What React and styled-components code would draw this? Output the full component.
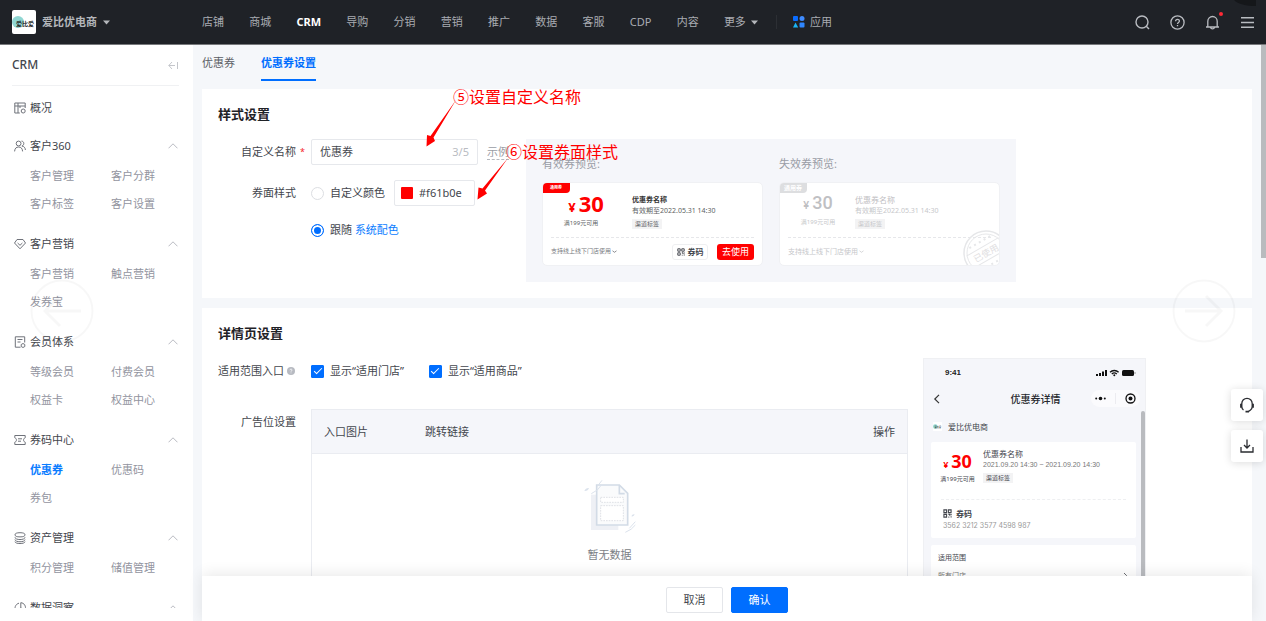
import React from "react";
import styled, { createGlobalStyle, css } from "styled-components";

const GlobalStyle = createGlobalStyle`
  *, *::before, *::after { box-sizing: border-box; }
  body { margin: 0; background: #f5f7fa; }
  body, button, input, table {
    font-family: "Noto Sans", "Noto Sans CJK SC", sans-serif;
    font-size: 11px;
    line-height: 18px;
    color: #43464d;
  }
  button { margin: 0; padding: 0; border: 0; background: none; cursor: pointer; }
  a { color: inherit; text-decoration: none; }
  h1, h2, p, ul { margin: 0; padding: 0; }
  ul { list-style: none; }
  svg { display: block; flex: none; }
`;

const Shell = styled.div`
  display: flex;
  flex-direction: column;
  height: 100vh;
  overflow: hidden;
`;

/* ---------- top bar ---------- */

const TopBar = styled.header`
  flex: none;
  display: flex;
  align-items: center;
  height: 45px;
  padding: 0 11px 0 12px;
  background: #1f2227;
  border-bottom: 1px solid #77797c;
  color: #a9acb2;
  position: relative;
`;

const Corner = styled.svg`
  position: absolute;
  top: 0;
  right: 8px;
`;

const Shop = styled.button`
  display: flex;
  align-items: center;
  gap: 6px;
  width: 190px;
  color: #b4b7bb;
  font-weight: 700;
`;

const TopNav = styled.nav`
  display: flex;
  justify-content: space-between;
  width: 556px;
`;

const TopLink = styled.a`
  display: flex;
  align-items: center;
  gap: 5px;
  color: ${(p) => (p.$active ? "#fff" : "#a9acb2")};
  font-weight: ${(p) => (p.$active ? 700 : 400)};
`;

const Separator = styled.span`
  width: 1px;
  height: 14px;
  margin: 0 16px 0 18px;
  background: #2c2f34;
`;

const Tools = styled.div`
  display: flex;
  gap: 20px;
  margin-left: auto;
`;

const ToolButton = styled.button`
  position: relative;
  width: 15px;
  height: 15px;
  color: #b9bcc1;
`;

const Dot = styled.span`
  position: absolute;
  top: -3px;
  right: -3px;
  width: 4px;
  height: 4px;
  border-radius: 50%;
  background: #ff2a36;
`;

const Caret = () => (
  <svg width="7" height="5" viewBox="0 0 7 5">
    <path d="M0 0.5h7L3.5 4.5z" fill="#b4b7bb" />
  </svg>
);

/* ---------- side menu ---------- */

const Body = styled.div`
  flex: 1;
  min-height: 0;
  display: flex;
  position: relative;
`;

const Side = styled.aside`
  flex: none;
  display: flex;
  flex-direction: column;
  width: 193px;
  padding-bottom: 13px;
  background: #fff;
`;

const SideHead = styled.div`
  flex: none;
  display: flex;
  justify-content: space-between;
  align-items: center;
  height: 41px;
  margin: 0 14px 0 12px;
  border-bottom: 1px solid #f0f1f3;
  font-size: 12px;
  font-weight: 500;
`;

const SideList = styled.nav`
  flex: 1;
  min-height: 0;
  padding-top: 8px;
  overflow: auto;
  scrollbar-width: none;
`;

const Group = styled.section`
  margin-bottom: ${(p) => (p.$single ? 8 : 10)}px;
`;

const groupHead = css`
  display: flex;
  align-items: center;
  gap: 4px;
  width: 100%;
  padding: 0 15px 0 14px;
  color: #43464d;
  text-align: left;
  span { flex: 1; }
  svg { color: #6f727a; }
`;

const GroupLink = styled.a`
  ${groupHead}
  height: 28px;
`;

const GroupButton = styled.button`
  ${groupHead}
  height: 32px;
`;

const SubList = styled.ul`
  display: grid;
  grid-template-columns: 81px 1fr;
  padding-left: 30px;
`;

const SubLink = styled.a`
  display: block;
  line-height: 28px;
  color: ${(p) => (p.$active ? "#0a7cff" : "#9294a0")};
  font-weight: ${(p) => (p.$active ? 700 : 400)};
`;

/* ---------- main area ---------- */

const Main = styled.main`
  flex: 1;
  min-width: 0;
  display: flex;
  flex-direction: column;
  padding: 0 14px 0 9px;
`;

const Scroller = styled.div`
  flex: 1;
  min-height: 0;
  overflow: auto;
  scrollbar-width: none;
`;

const ScrollThumb = styled.span`
  position: absolute;
  top: 0;
  right: 0;
  width: 5px;
  height: 213px;
  background: #b9bbbe;
`;

const Tabs = styled.nav`
  display: flex;
  gap: 26px;
  margin-bottom: 8px;
`;

const Tab = styled.a`
  height: 36px;
  line-height: 36px;
  color: ${(p) => (p.$active ? "#006eff" : "#5a5d64")};
  font-weight: ${(p) => (p.$active ? 700 : 400)};
  box-shadow: ${(p) => (p.$active ? "inset 0 -2px #006eff" : "none")};
`;

const Panel = styled.section`
  margin-bottom: 10px;
  padding: 0 16px 16px;
  background: #fff;
`;

const PanelTitle = styled.h2`
  height: 50px;
  line-height: 50px;
  font-size: 13px;
  font-weight: 700;
  color: #1f2227;
`;

const Columns = styled.div`
  display: flex;
  align-items: flex-start;
  gap: ${(p) => p.$gap || 0}px;
  padding-right: ${(p) => p.$right || 0}px;
`;

const Form = styled.div`
  display: flex;
  flex-direction: column;
  gap: ${(p) => p.$gap}px;
  min-width: 0;
  flex: ${(p) => (p.$width ? "none" : 1)};
  width: ${(p) => (p.$width ? p.$width + "px" : "auto")};
`;

const Field = styled.div`
  display: grid;
  grid-template-columns: 78px minmax(0, 1fr);
  column-gap: 15px;
  align-items: start;
`;

const FieldLabel = styled.label`
  position: relative;
  display: flex;
  align-items: center;
  justify-content: ${(p) => (p.$start ? "flex-start" : "flex-end")};
  gap: 3px;
  height: 26px;
  white-space: nowrap;
`;

const Required = styled.span`
  position: absolute;
  left: 100%;
  margin-left: 4px;
  color: #f5222d;
  font-size: 9px;
`;

const Line = styled.div`
  display: flex;
  align-items: center;
  gap: ${(p) => p.$gap || 9}px;
  height: 26px;
`;

const Stack = styled.div`
  display: flex;
  flex-direction: column;
  gap: 11px;
`;

const TextBox = styled.div`
  display: flex;
  align-items: center;
  width: 167px;
  height: 26px;
  padding: 0 8px;
  gap: 6px;
  border: 1px solid #e6e8ec;
  border-radius: 2px;
  color: #b9bcc2;
  input {
    flex: 1;
    min-width: 0;
    padding: 0;
    border: 0;
    outline: 0;
    background: none;
  }
`;

const ColorBox = styled(TextBox)`
  width: 81px;
  padding: 0 6px;
`;

const Swatch = styled.span`
  flex: none;
  width: 12px;
  height: 12px;
  border-radius: 1px;
  background: #f00;
`;

const Hint = styled.a`
  line-height: 15px;
  color: #9a9da5;
  border-bottom: 1px dashed #b5b8be;
`;

const Choice = styled.label`
  display: flex;
  align-items: center;
  gap: 6px;
  white-space: nowrap;
`;

const Radio = styled.input`
  appearance: none;
  width: 13px;
  height: 13px;
  margin: 0;
  border: 1px solid #dcdee2;
  border-radius: 50%;
  background: #fff;
  &:checked {
    border-color: #006eff;
    background: #006eff;
    box-shadow: inset 0 0 0 2px #fff;
  }
`;

const Tick = styled.input`
  appearance: none;
  display: grid;
  place-items: center;
  width: 13px;
  height: 13px;
  margin: 0;
  border: 1px solid #dcdee2;
  border-radius: 1px;
  &:checked {
    border-color: #006eff;
    background: #006eff;
  }
  &:checked::after {
    content: "";
    width: 8px;
    height: 4px;
    margin-bottom: 2px;
    border: solid #fff;
    border-width: 0 0 1px 1px;
    transform: rotate(-45deg);
  }
`;

const BlueLink = styled.a`
  color: #0a7cff;
`;

/* ---------- coupon previews ---------- */

const Preview = styled.div`
  display: flex;
  gap: 16px;
  padding: 16px;
  background: #f5f6fa;
`;

const PreviewItem = styled.figure`
  margin: 0;
  width: 221px;
`;

const PreviewCaption = styled.figcaption`
  margin-bottom: 9px;
  color: #999ca5;
`;

const Coupon = styled.article`
  position: relative;
  display: flex;
  flex-direction: column;
  height: 84px;
  padding: 0 8px;
  background: #fff;
  border: 1px solid #f0f1f4;
  border-radius: 5px;
  overflow: hidden;
  color: ${(p) => (p.$used ? "#c6c7ca" : "#5d5f64")};
`;

const CouponTag = styled.span`
  position: absolute;
  top: -1px;
  left: -1px;
  width: 28px;
  height: 11px;
  line-height: 12px;
  border-radius: 4px 0 4px 0;
  background: ${(p) => (p.$used ? "#dddee0" : "#f00")};
  color: #fff;
  font-size: ${(p) => (p.$used ? 6 : 4)}px;
  font-weight: 700;
  text-align: center;
`;

const CouponTop = styled.div`
  display: grid;
  grid-template-columns: 60px 1fr;
  column-gap: ${(p) => (p.$used ? 7 : 21)}px;
  height: 55px;
  border-bottom: 1px dashed #e6e7ea;
`;

const Price = styled.div`
  display: flex;
  flex-direction: column;
  align-items: center;
  padding-top: ${(p) => p.$top}px;
  white-space: nowrap;
`;

const Amount = styled.div`
  display: flex;
  align-items: baseline;
  gap: 3px;
  padding-left: ${(p) => p.$indent || 0}px;
  line-height: ${(p) => p.$line}px;
  font-size: ${(p) => p.$size}px;
  font-weight: ${(p) => (p.$used ? 500 : 700)};
  font-family: ${(p) => (p.$used ? "Roboto, sans-serif" : "inherit")};
  color: ${(p) => (p.$used ? "#bfc0c3" : "#f00")};
  small { font-size: ${(p) => p.$small}px; }
`;

const Fine = styled.span`
  font-size: ${(p) => p.$size}px;
  line-height: 11px;
  color: ${(p) => p.$color || "inherit"};
  font-weight: ${(p) => (p.$bold ? 700 : 400)};
  font-family: ${(p) => p.$font || "inherit"};
  white-space: nowrap;
`;

const Info = styled.div`
  display: flex;
  flex-direction: column;
  align-items: flex-start;
  padding-top: ${(p) => p.$top}px;
`;

const Chip = styled.span`
  margin-top: 3px;
  padding: 0 3px;
  background: #f3f3f4;
  font-size: 6px;
  line-height: 10px;
`;

const CouponFoot = styled.div`
  flex: 1;
  display: flex;
  align-items: center;
  gap: 9px;
`;

const MiniText = styled.div`
  flex: 1;
  display: flex;
  align-items: center;
  gap: 1px;
`;

const CodeButton = styled.button`
  display: flex;
  align-items: center;
  justify-content: center;
  gap: 3px;
  width: 36px;
  height: 16px;
  border: 1px solid #eeeff1;
  border-radius: 3px;
  font-size: 8px;
  font-weight: 700;
`;

const UseButton = styled.button`
  width: 37px;
  height: 16px;
  line-height: 16px;
  border-radius: 3px;
  background: #f00;
  color: #fff;
  font-size: 9px;
`;

const Stamp = styled.svg`
  position: absolute;
  right: -10px;
  bottom: -11px;
`;

/* ---------- table ---------- */

const Table = styled.table`
  width: 100%;
  border: 1px solid #eaecf1;
  border-spacing: 0;
  th {
    height: 44px;
    padding: 0 12px;
    background: #f5f6fa;
    border-bottom: 1px solid #eaecf1;
    font-weight: 400;
    text-align: left;
  }
  th:first-child { width: 101px; }
  th:last-child { text-align: right; }
  td { padding: 25px 0 60px; }
`;

const Empty = styled.div`
  display: flex;
  flex-direction: column;
  align-items: center;
  gap: 12px;
  color: #7b7e85;
`;

/* ---------- phone preview ---------- */

const Phone = styled.div`
  flex: none;
  position: relative;
  width: 223px;
  height: 360px;
  padding: 0 9px 0 7px;
  background: #f5f6fa;
  border: 1px solid #eff0f3;
`;

const PhoneStatus = styled.div`
  display: flex;
  align-items: center;
  justify-content: space-between;
  height: 27px;
  padding-left: 14px;
  font: 700 8px/10px "Liberation Sans", sans-serif;
  color: #222;
`;

const PhoneBar = styled.div`
  display: grid;
  grid-template-columns: 49px 1fr 49px;
  align-items: center;
  height: 25px;
  margin-right: -4px;
  font-size: 10px;
  font-weight: 500;
  color: #26282c;
  text-align: center;
`;

const Capsule = styled.span`
  display: flex;
  align-items: center;
  justify-content: space-around;
  height: 17px;
  border-radius: 9px;
  background: #fbfbfd;
`;

const CapsuleRule = styled.span`
  width: 1px;
  height: 11px;
  background: #ececf0;
`;

const PhoneShop = styled.div`
  display: flex;
  align-items: center;
  gap: 6px;
  height: 31px;
  padding-left: 2px;
  font-size: 8px;
`;

const PhoneCard = styled.div`
  margin-bottom: 7px;
  padding: ${(p) => p.$pad};
  background: #fff;
  border-radius: 2px;
`;

const PhoneTop = styled.div`
  display: grid;
  grid-template-columns: 33px 1fr;
  column-gap: 9px;
  height: 58px;
  border-bottom: 1px dashed #eeeff1;
`;

const PhoneCode = styled.div`
  display: flex;
  flex-direction: column;
  gap: 1px;
  padding: 8px 2px 7px;
`;

const CodeTitle = styled.div`
  display: flex;
  align-items: center;
  gap: 4px;
`;

const PhoneRow = styled.div`
  display: flex;
  align-items: center;
  justify-content: space-between;
  height: 18px;
`;

const PhoneThumb = styled.span`
  position: absolute;
  top: 52px;
  right: 0;
  width: 4px;
  height: 300px;
  border-radius: 2px;
  background: #b9bbbf;
`;

/* ---------- footer and floating parts ---------- */

const Footer = styled.footer`
  flex: none;
  position: relative;
  display: flex;
  justify-content: center;
  align-items: center;
  gap: 8px;
  height: 45px;
  padding-top: 2px;
  background: #fff;
  box-shadow: 0 -2px 14px rgba(0, 0, 0, 0.09);
`;

const FootButton = styled.button`
  width: 57px;
  height: 26px;
  border: 1px solid ${(p) => (p.$primary ? "#006eff" : "#e4e6ea")};
  border-radius: 2px;
  background: ${(p) => (p.$primary ? "#006eff" : "#fff")};
  color: ${(p) => (p.$primary ? "#fff" : "#43464d")};
`;

const PageArrow = styled.button`
  position: fixed;
  top: 50%;
  ${(p) => p.$side}: 30px;
  width: 64px;
  height: 64px;
  margin-top: -32px;
`;

const Floaters = styled.div`
  position: fixed;
  right: 3px;
  top: 389px;
  display: flex;
  flex-direction: column;
  gap: 9px;
`;

const FloatButton = styled.button`
  display: grid;
  place-items: center;
  width: 32px;
  height: 32px;
  border-radius: 3px;
  background: #fff;
  color: #2a2c31;
  box-shadow: 0 1px 8px rgba(0, 0, 0, 0.14);
`;

const Note = styled.p`
  position: absolute;
  left: ${(p) => p.$x}px;
  top: ${(p) => p.$y}px;
  font-size: 16px;
  line-height: 24px;
  color: #f00;
  white-space: nowrap;
`;

const NoteArrows = styled.svg`
  position: absolute;
  left: 420px;
  top: 90px;
  pointer-events: none;
`;

/* ---------- icons ---------- */

const Stroke = ({ size = 12, box = 12, w = 1, children }) => (
  <svg width={size} height={size} viewBox={`0 0 ${box} ${box}`} fill="none" stroke="currentColor" strokeWidth={w}>
    {children}
  </svg>
);

const menuIcons = {
  overview: <path d="M.8 1h10.4v3H.8zM.8 4v7h5M4 1v10M6 4v2M11.2 4v2M7.2 9a2 2 0 1 0 4 0 2 2 0 1 0-4 0" />,
  people: <path d="M2.2 3.5a2.4 2.4 0 1 0 4.8 0 2.4 2.4 0 1 0-4.8 0M.6 11.4C.8 8.4 2.2 7 4.6 7s3.8 1.400 4 4.400M7.500 1.100c3 .2 3 4.200.4 4.900 2.200.4 3.300 1.600 3.500 4" />,
  gem: <path d="M3 1.500h6L11.500 5 6 10.800.5 5zM3.600 5 6 7.300 8.400 5" />,
  member: <path d="M6.500 11.200H1.300V.8h9.400v5.700M3.500 3.500h5M3.500 6h3M9 7.500l1.800 1v2L9 11.500l-1.800-1v-2z" />,
  ticket: <path d="M.8 1.500h10.400v2.300c-2.200.9-2.200 3.500 0 4.400v2.300H.8V8.200c2.200-.9 2.200-3.500 0-4.400zM4 4.800h4M4 7.200h3" />,
  stack: <path d="M1 2.800a5 2.100 0 1 0 10 0 5 2.100 0 1 0-10 0M1 5.300c0 3 10 3 10 0M1 7.500c0 3 10 3 10 0M1 9.600c0 2.600 10 2.600 10 0" />,
  pie: <path d="M5 1.200A5 5 0 1 0 10.600 8.200M6.800.7V6l4.200 2C12.500 4.500 10.300.9 6.800.7z" />,
};

const ChevronUp = () => (
  <svg width="10" height="6" viewBox="0 0 10 6" fill="none" stroke="#b9bbc2">
    <path d="M.5 5.300 5 .8l4.500 4.500" />
  </svg>
);

const ShopLogo = ({ size }) => (
  <svg width={size} height={size} viewBox="0 0 24 24">
    <rect width="24" height="24" rx="2" fill="#fff" />
    <circle cx="6" cy="12" r="6" fill="#8fd6d2" />
    <text x="4" y="16" fontSize="6" fontWeight="700" fill="#222">爱比爱</text>
  </svg>
);

const QrIcon = ({ size = 8 }) => (
  <Stroke size={size} box={10} w={1.2}>
    <path d="M1 1h3v3H1zM6 1h3v3H6zM1 6h3v3H1zM6 6h1.500v1.500M9 5.500V7M6 9h1M9 8v1.500" />
  </Stroke>
);

const EmptyArt = () => (
  <svg width="52" height="55" viewBox="0 0 156 165" fill="none">
    <rect x="21" y="47" width="82" height="106" fill="#eef0f5" />
    <path d="M38 18h68l25 25v95H38z" fill="#fafbfc" stroke="#d2dbe6" strokeWidth="5" />
    <path d="M106 18v26h16" stroke="#d2dbe6" strokeWidth="5" />
    <path d="M50 55h68v15H50zM50 80h68v45H50z" stroke="#dfe1e6" strokeWidth="3" strokeDasharray="5 3" fill="#fff" />
    <path d="M22 44Q44 34 52 18M40 22 54 4M124 160Q144 152 154 138M136 148 154 128" stroke="#dbe2ec" strokeWidth="3" />
    <path d="M1 36q4-10 14-9-3 10-14 9zM142 112q3-8 10-6-2 8-10 6z" fill="#dbe2ec" />
  </svg>
);

/* ---------- data ---------- */

const topLinks = ["店铺", "商城", "CRM", "导购", "分销", "营销", "推广", "数据", "客服", "CDP", "内容"];

const groups = [
  { icon: "people", title: "客户360", items: ["客户管理", "客户分群", "客户标签", "客户设置"] },
  { icon: "gem", title: "客户营销", items: ["客户营销", "触点营销", "发券宝"] },
  { icon: "member", title: "会员体系", items: ["等级会员", "付费会员", "权益卡", "权益中心"] },
  { icon: "ticket", title: "券码中心", items: ["优惠券", "优惠码", "券包"] },
  { icon: "stack", title: "资产管理", items: ["积分管理", "储值管理"] },
  { icon: "pie", title: "数据洞察", items: [] },
];

/* ---------- sections ---------- */

const Header = () => (
  <TopBar>
    <Corner width="26" height="7" viewBox="0 0 26 7">
      <path d="M2 0h22v6C14 6 6 4 2 0z" fill="#15171a" />
    </Corner>
    <Shop>
      <ShopLogo size={24} />
      爱比优电商
      <Caret />
    </Shop>
    <TopNav>
      {topLinks.map((t) => (
        <TopLink key={t} href="#" $active={t === "CRM"}>{t}</TopLink>
      ))}
      <TopLink href="#">更多 <Caret /></TopLink>
    </TopNav>
    <Separator />
    <TopLink href="#">
      <svg width="12" height="12" viewBox="0 0 12 12">
        <rect x="0" y="0" width="5" height="5" rx="1" fill="#0a6cff" />
        <circle cx="9" cy="2.500" r="2.500" fill="#3f8cff" />
        <path d="M2.500 6.500 5.200 11.500H0z" fill="#19b5f5" />
        <rect x="6.500" y="6.500" width="5" height="5" rx="1" fill="#2f86ff" />
      </svg>
      应用
    </TopLink>
    <Tools>
      <ToolButton aria-label="搜索">
        <Stroke size={15} box={15} w={1.4}><circle cx="7" cy="7" r="6" /><path d="m11.300 11.300 2.700 2.700" /></Stroke>
      </ToolButton>
      <ToolButton aria-label="帮助">
        <Stroke size={15} box={15} w={1.3}>
          <circle cx="7.500" cy="7.500" r="6.600" />
          <path d="M5.600 6.200c0-2.500 3.800-2.400 3.800-.2 0 1.400-1.900 1.400-1.900 2.900M7.500 10v1.300" />
        </Stroke>
      </ToolButton>
      <ToolButton aria-label="通知">
        <Stroke size={15} box={15} w={1.3}>
          <path d="M1 12h13M2.800 12V6.200a4.700 4.700 0 0 1 9.400 0V12M5.500 12.500c.6 1.800 3.400 1.800 4 0" />
        </Stroke>
        <Dot />
      </ToolButton>
      <ToolButton aria-label="菜单">
        <Stroke size={15} box={15} w={1.4}><path d="M1 2.700h13M1 7.500h13M1 12.300h13" /></Stroke>
      </ToolButton>
    </Tools>
  </TopBar>
);

const SideMenu = () => (
  <Side>
    <SideHead>
      CRM
      <svg width="11" height="9" viewBox="0 0 11 9" fill="none" stroke="#c4c6cb">
        <path d="M4 1 .8 4.500 4 8M.8 4.500H7M9.500 1v7" />
      </svg>
    </SideHead>
    <SideList>
      <Group $single>
        <GroupLink href="#"><Stroke>{menuIcons.overview}</Stroke><span>概况</span></GroupLink>
      </Group>
      {groups.map((g) => (
        <Group key={g.title}>
          <GroupButton><Stroke>{menuIcons[g.icon]}</Stroke><span>{g.title}</span><ChevronUp /></GroupButton>
          <SubList>
            {g.items.map((t) => (
              <li key={t}><SubLink href="#" $active={t === "优惠券"}>{t}</SubLink></li>
            ))}
          </SubList>
        </Group>
      ))}
    </SideList>
  </Side>
);

const CouponPreview = ({ used }) => (
  <PreviewItem>
    <PreviewCaption>{used ? "失效券预览:" : "有效券预览:"}</PreviewCaption>
    <Coupon $used={used}>
      <CouponTag $used={used}>通用券</CouponTag>
      <CouponTop $used={used}>
        <Price $top={9}>
          <Amount $size={used ? 18 : 22} $small={used ? 11 : 13} $line={22} $indent={used ? 0 : 10} $used={used}>
            <small>¥</small>30
          </Amount>
          <Fine $size={6}>满199元可用</Fine>
        </Price>
        <Info $top={11}>
          <Fine $size={used ? 8 : 7} $bold={!used} $color={used ? "#bfc0c3" : "#333"}>优惠券名称</Fine>
          <Fine $size={7}>有效期至2022.05.31 14:30</Fine>
          <Chip>渠道标签</Chip>
        </Info>
      </CouponTop>
      <CouponFoot>
        <MiniText>
          <Fine $size={used ? 7 : 6} $color={used ? "#c6c7ca" : "#77797e"}>支持线上线下门店使用</Fine>
          <Stroke size={5} box={5} w={0.7}><path d="M.5 1.800l2 1.500 2-1.500" /></Stroke>
        </MiniText>
        {!used && <CodeButton><QrIcon />券码</CodeButton>}
        {!used && <UseButton>去使用</UseButton>}
      </CouponFoot>
      {used && (
        <Stamp width="46" height="46" viewBox="0 0 46 46" fill="none" stroke="#e6e7e9">
          <circle cx="23" cy="23" r="22" strokeWidth="1.500" />
          <circle cx="23" cy="23" r="19" />
          <g transform="rotate(-30 23 23)">
            <path d="M4.500 16h37M4.500 30h37" />
            <path d="M11 10.500h24M11 35.500h24" strokeWidth="2" strokeDasharray="2 3.500" />
            <text x="23" y="26.500" fontSize="9" textAnchor="middle" fill="#dfe0e2" stroke="none">已使用</text>
          </g>
        </Stamp>
      )}
    </Coupon>
  </PreviewItem>
);

const PhonePreview = () => (
  <Phone>
    <PhoneStatus>
      9:41
      <svg width="40" height="8" viewBox="0 0 40 8">
        <path d="M0 5h2v2H0zM3 4h2v3H3zM6 2.500h2v4.500H6zM9 1h2v6H9z" fill="#111" />
        <path d="M14 3.200c2.300-2.300 6.300-2.300 8.600 0M15.800 5c1.400-1.300 3.600-1.300 5 0" fill="none" stroke="#111" strokeWidth="1.300" />
        <circle cx="18.300" cy="6.300" r="1" fill="#111" />
        <rect x="26" y="1" width="12" height="6" rx="1.500" fill="#111" />
        <path d="M39 3v2" stroke="#999" />
      </svg>
    </PhoneStatus>
    <PhoneBar>
      <svg width="10" height="10" viewBox="0 0 10 10" fill="none" stroke="#333" strokeWidth="1.200"><path d="M8 .8 3.800 5 8 9.200" /></svg>
      优惠券详情
      <Capsule>
        <svg width="11" height="5" viewBox="0 0 11 5" fill="#111"><circle cx="1.200" cy="2.500" r="1" /><circle cx="5.500" cy="2.500" r="1.800" /><circle cx="9.800" cy="2.500" r="1" /></svg>
        <CapsuleRule />
        <svg width="11" height="11" viewBox="0 0 11 11"><circle cx="5.500" cy="5.500" r="4.500" fill="none" stroke="#111" strokeWidth="1.300" /><circle cx="5.500" cy="5.500" r="2" fill="#111" /></svg>
      </Capsule>
    </PhoneBar>
    <PhoneShop><ShopLogo size={9} />爱比优电商</PhoneShop>
    <PhoneCard $pad="0 10px">
      <PhoneTop>
        <Price $top={10}>
          <Amount $size={18} $small={9} $line={18}><small>¥</small>30</Amount>
          <Fine $size={6}>满199元可用</Fine>
        </Price>
        <Info $top={6}>
          <Fine $size={8}>优惠券名称</Fine>
          <Fine $size={7} $color="#777" $font='"Liberation Sans", sans-serif'>2021.09.20 14:30 ~ 2021.09.20 14:30</Fine>
          <Chip>渠道标签</Chip>
        </Info>
      </PhoneTop>
      <PhoneCode>
        <CodeTitle><QrIcon size={9} /><Fine $size={8} $bold>券码</Fine></CodeTitle>
        <Fine $size={7} $color="#999" $font="Inter, sans-serif">3562 3212 3577 4598 987</Fine>
      </PhoneCode>
    </PhoneCard>
    <PhoneCard $pad="3px 7px">
      <PhoneRow><Fine $size={7}>适用范围</Fine></PhoneRow>
      <PhoneRow>
        <Fine $size={7} $color="#777">所有门店</Fine>
        <Stroke size={7} box={7} w={0.8}><path d="M2 1l2.500 2.500L2 6" /></Stroke>
      </PhoneRow>
    </PhoneCard>
    <PhoneThumb />
  </Phone>
);

const StylePanel = () => (
  <Panel>
    <PanelTitle>样式设置</PanelTitle>
    <Columns>
      <Form $gap={15} $width={308}>
        <Field>
          <FieldLabel htmlFor="coupon-name">自定义名称<Required>*</Required></FieldLabel>
          <Line>
            <TextBox><input id="coupon-name" defaultValue="优惠券" />3/5</TextBox>
            <Hint href="#">示例</Hint>
          </Line>
        </Field>
        <Field>
          <FieldLabel as="span">券面样式</FieldLabel>
          <Stack>
            <Line>
              <Choice><Radio type="radio" name="face" />自定义颜色</Choice>
              <ColorBox as="label"><Swatch /><input aria-label="颜色" defaultValue="#f61b0e" /></ColorBox>
            </Line>
            <Line>
              <Choice><Radio type="radio" name="face" defaultChecked /><span>跟随 <BlueLink href="#">系统配色</BlueLink></span></Choice>
            </Line>
          </Stack>
        </Field>
      </Form>
      <Preview>
        <CouponPreview />
        <CouponPreview used />
      </Preview>
    </Columns>
  </Panel>
);

const DetailPanel = () => (
  <Panel>
    <PanelTitle>详情页设置</PanelTitle>
    <Columns $gap={15} $right={90}>
      <Form $gap={25}>
        <Field>
          <FieldLabel as="span" $start>
            适用范围入口
            <svg width="8" height="8" viewBox="0 0 8 8">
              <circle cx="4" cy="4" r="4" fill="#b7bac1" />
              <path d="M3 3.200c0-1.500 2-1.400 2-.1 0 .8-1 .8-1 1.600M4 5.500v.8" fill="none" stroke="#fff" strokeWidth=".8" />
            </svg>
          </FieldLabel>
          <Line $gap={25}>
            <Choice><Tick type="checkbox" defaultChecked />显示“适用门店”</Choice>
            <Choice><Tick type="checkbox" defaultChecked />显示“适用商品”</Choice>
          </Line>
        </Field>
        <Field>
          <FieldLabel as="span">广告位设置</FieldLabel>
          <Table>
            <thead>
              <tr><th>入口图片</th><th>跳转链接</th><th>操作</th></tr>
            </thead>
            <tbody>
              <tr><td colSpan={3}><Empty><EmptyArt />暂无数据</Empty></td></tr>
            </tbody>
          </Table>
        </Field>
      </Form>
      <PhonePreview />
    </Columns>
  </Panel>
);

const ArrowArt = ({ flip }) => (
  <svg width="64" height="64" viewBox="0 0 64 64" fill="none" stroke="#000" strokeOpacity=".03">
    <circle cx="32" cy="32" r="30.500" strokeWidth="2" />
    <path d={flip ? "M13 32h36M34 17l15 15-15 15" : "M51 32H15M30 17 15 32l15 15"} strokeWidth="3" />
  </svg>
);

export default function App() {
  return (
    <Shell>
      <GlobalStyle />
      <Header />
      <Body>
        <SideMenu />
        <Main>
          <Scroller>
            <Tabs>
              <Tab href="#">优惠券</Tab>
              <Tab href="#" $active>优惠券设置</Tab>
            </Tabs>
            <StylePanel />
            <DetailPanel />
          </Scroller>
          <Footer>
            <FootButton>取消</FootButton>
            <FootButton $primary>确认</FootButton>
          </Footer>
        </Main>
        <ScrollThumb />
      </Body>
      <PageArrow $side="left" aria-label="上一张"><ArrowArt /></PageArrow>
      <PageArrow $side="right" aria-label="下一张"><ArrowArt flip /></PageArrow>
      <Floaters>
        <FloatButton aria-label="客服">
          <Stroke size={16} box={16} w={1.3}>
            <path d="M4.500 13C3.200 12.200 2.800 11 2.800 9.500V6.500a5.200 5.200 0 0 1 10.400 0v3c0 1.500-.4 2.700-1.700 3.500L9.500 14.500" />
            <path d="M2 6.800v4M14 6.800v4M6.500 14.700h3.500" strokeWidth="1.800" />
          </Stroke>
        </FloatButton>
        <FloatButton aria-label="下载">
          <Stroke size={14} box={14} w={1.3}>
            <path d="M1 8v5h12V8M7 .5v8.500M4 6l3 3 3-3" />
          </Stroke>
        </FloatButton>
      </Floaters>
      <NoteArrows width="100" height="120" viewBox="420 90 100 120" fill="#f00">
        <path d="M456 100 433.500 137.500 435 141 426.500 146.500 427 135l3.500 1z" />
        <path d="M508 158 485 190.500 487 193.500 477.500 199.500 478.500 187.500l4 1z" />
      </NoteArrows>
      <Note $x={453} $y={85}>⑤设置自定义名称</Note>
      <Note $x={506} $y={140}>⑥设置券面样式</Note>
    </Shell>
  );
}
